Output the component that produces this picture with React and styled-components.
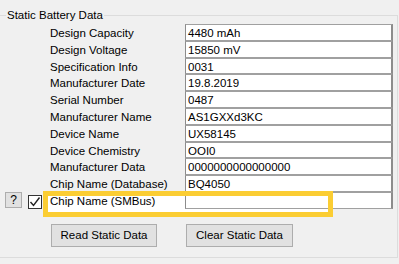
import React from 'react';
import styled, { createGlobalStyle } from 'styled-components';

const GlobalStyle = createGlobalStyle`
  html, body {
    margin: 0;
    padding: 0;
    background: #f0f0f0;
  }

  body {
    font-family: "Liberation Sans", Arial, sans-serif;
    font-size: 11.5px;
    color: #000;
  }
`;

const fields = [
    { label: 'Design Capacity', value: '4480 mAh' },
    { label: 'Design Voltage', value: '15850 mV' },
    { label: 'Specification Info', value: '0031' },
    { label: 'Manufacturer Date', value: '19.8.2019' },
    { label: 'Serial Number', value: '0487' },
    { label: 'Manufacturer Name', value: 'AS1GXXd3KC' },
    { label: 'Device Name', value: 'UX58145' },
    { label: 'Device Chemistry', value: 'OOI0' },
    { label: 'Manufacturer Data', value: '0000000000000000' },
    { label: 'Chip Name (Database)', value: 'BQ4050' },
    { label: 'Chip Name (SMBus)', value: '', extra: true },
];

const Page = styled.div`
  width: 399px;
  height: 264px;
  padding-top: 8px;
  box-sizing: border-box;
  overflow: hidden;
`;

const GroupBox = styled.fieldset`
  margin: 0;
  min-width: 0;
  width: 398px;
  height: 250px;
  box-sizing: border-box;
  padding: 2px 0 0 0;
  border: 1px solid #dcdcdc;
  border-left: none;
`;

const Legend = styled.legend`
  margin-left: 6px;
  padding: 0 1px;
  font-size: 11.5px;
  line-height: 14px;
`;

const Fields = styled.div`
  display: flex;
  flex-direction: column;
`;

const Row = styled.div`
  position: relative;
  display: flex;
  align-items: center;
  height: 16.8px;
`;

const Gutter = styled.div`
  width: 50px;
  height: 100%;
  box-sizing: border-box;
  padding-left: 5px;
  display: flex;
  align-items: center;
  gap: 6px;
`;

const HelpButton = styled.button`
  width: 17px;
  height: 16px;
  padding: 0;
  border: 1px solid #adadad;
  background: #e1e1e1;
  font-family: inherit;
  font-size: 12px;
  line-height: 14px;
  color: #000;
`;

const Check = styled.svg`
  display: block;
  flex: none;
  margin-top: 3px;
`;

const Label = styled.div`
  position: relative;
  z-index: 1;
  width: 135px;
  height: 100%;
  line-height: 18px;
  white-space: nowrap;
  background: ${p => (p.$highlight ? '#fff' : 'transparent')};
`;

const TextBox = styled.div`
  position: relative;
  z-index: 1;
  width: 208px;
  height: 100%;
  box-sizing: border-box;
  padding-left: 2px;
  border: 1px solid #a0a0a0;
  border-left-color: #8c8c8c;
  border-right: 2px solid #8c8c8c;
  background: #fff;
  line-height: 16px;
  white-space: nowrap;
`;

const Highlight = styled.div`
  position: absolute;
  left: 43px;
  top: -1px;
  width: 290px;
  height: 26px;
  background: #fff;

  &::after {
    content: '';
    position: absolute;
    inset: 0;
    z-index: 2;
    border: 5px solid #fbcd33;
  }
`;

const ButtonRow = styled.div`
  display: flex;
  gap: 29px;
  padding-left: 51px;
  margin-top: 15px;
`;

const Button = styled.button`
  width: ${p => p.$width}px;
  height: 23px;
  padding: 0;
  border: 1px solid #adadad;
  background: #e1e1e1;
  font-family: inherit;
  font-size: 11.5px;
  color: #000;
`;

function CheckBox() {
    return (
        <Check width="14" height="14" viewBox="0 0 14 14">
            <rect x="0.5" y="0.5" width="13" height="13" fill="#fff" stroke="#333" />
            <path d="M2.5 7 L5.5 10.5 L11.5 2.5" fill="none" stroke="#222" strokeWidth="1.4" />
        </Check>
    );
}

function FieldRow({ label, value, extra }) {
    return (
        <Row>
            <Gutter>
                {extra && <HelpButton type='button'>?</HelpButton>}
                {extra && <CheckBox />}
            </Gutter>
            {extra && <Highlight />}
            <Label $highlight={extra}>{label}</Label>
            <TextBox>{value}</TextBox>
        </Row>
    );
}

function App() {
    return (
        <>
        <GlobalStyle />
        <Page>
            <GroupBox>
                <Legend>Static Battery Data</Legend>
                <Fields>
                    {fields.map(f => <FieldRow key={f.label} {...f} />)}
                </Fields>
                <ButtonRow>
                    <Button type='button' $width={106}>Read Static Data</Button>
                    <Button type='button' $width={107}>Clear Static Data</Button>
                </ButtonRow>
            </GroupBox>
        </Page>
        </>
    );
}

export default App;
